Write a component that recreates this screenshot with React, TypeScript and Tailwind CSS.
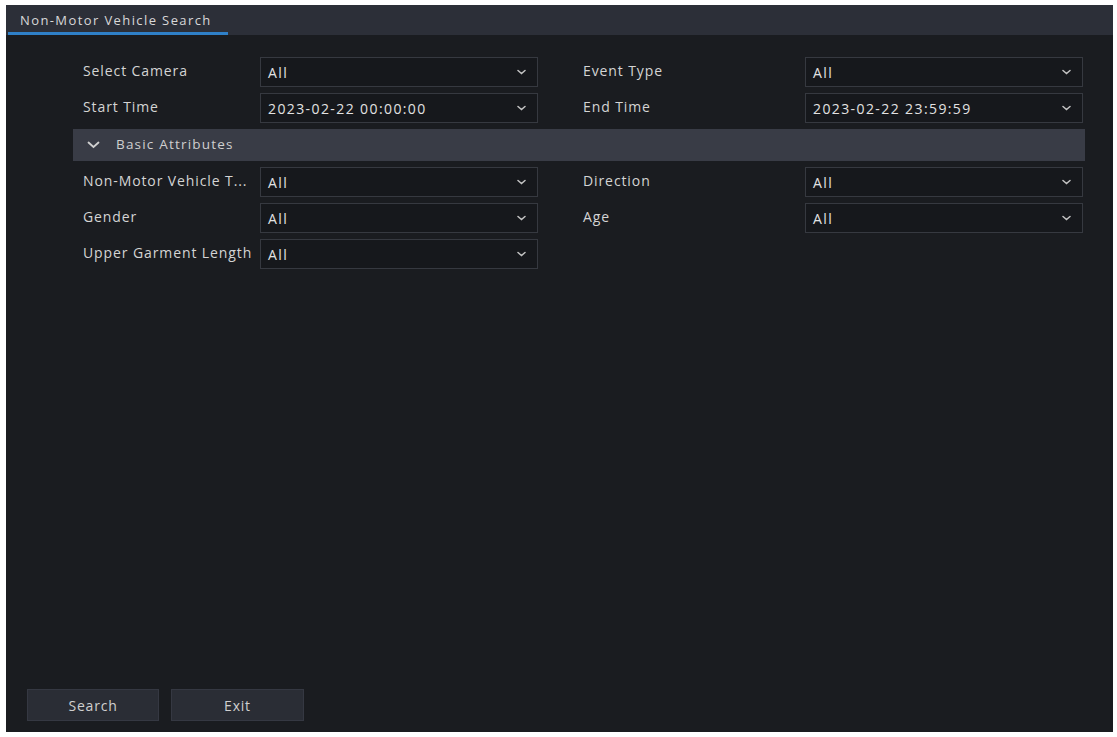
import React from 'react';

const font = { fontFamily: '"Open Sans", "Liberation Sans", sans-serif' };

function Chevron({ className = '', big = false }: { className?: string; big?: boolean }) {
  if (big) {
    return (
      <svg width="13" height="8" viewBox="0 0 13 8" className={className}>
        <path d="M1.5 1.5l5 4.5 5-4.5" fill="none" stroke="currentColor" strokeWidth="1.8" strokeLinecap="round" />
      </svg>
    );
  }
  return (
    <svg width="9" height="6" viewBox="0 0 9 6" className={className}>
      <path d="M1 1.5l3.5 3L8 1.5" fill="none" stroke="currentColor" strokeWidth="1.5" strokeLinecap="round" />
    </svg>
  );
}

function Select({ value }: { value: string }) {
  return (
    <div className="flex h-[30px] w-[278px] items-center justify-between border border-[#363940] bg-[#16181c] pl-[7px] pr-[11px]">
      <span className="text-[14px] tracking-[1.4px] text-[#e2e2e2]">{value}</span>
      <Chevron className="text-[#c4c4c4]" />
    </div>
  );
}

function Field({ label, value, right = false }: { label: string; value: string; right?: boolean }) {
  return (
    <div className="flex items-center">
      <div className={`${right ? 'w-[222px]' : 'w-[177px]'} -mt-[3px] whitespace-nowrap text-[14px] tracking-[0.9px] text-[#d4d4d4]`}>{label}</div>
      <Select value={value} />
    </div>
  );
}

export default function App() {
  return (
    <div className="h-[737px] w-[1117px] bg-white pl-[6px] pr-[4px] pt-[5px]" style={font}>
      <div className="flex h-[727px] flex-col bg-[#1a1c20]">
        <div className="flex h-[30px] items-end bg-[#2c2f38]">
          <div className="ml-[2px] w-[220px] border-b-[3px] border-[#2f80c8] pb-[2px] pl-[12px] text-[13px] tracking-[1.4px] text-[#d8d8d8]">
            Non-Motor Vehicle Search
          </div>
        </div>

        <div className="flex flex-1 flex-col pt-[22px]">
          <div className="flex flex-col gap-[6px] pl-[77px]">
            <div className="flex gap-[45px]">
              <Field label="Select Camera" value="All" />
              <Field label="Event Type" value="All" right />
            </div>
            <div className="flex gap-[45px]">
              <Field label="Start Time" value="2023-02-22 00:00:00" />
              <Field label="End Time" value="2023-02-22 23:59:59" right />
            </div>
          </div>

          <div className="ml-[67px] mt-[6px] flex h-[32px] w-[1012px] items-center bg-[#393c46] pl-[14px]">
            <Chevron big className="text-[#d0d0d0]" />
            <span className="ml-[16px] -mt-[2px] text-[13.5px] tracking-[1.2px] text-[#cfcfcf]">Basic Attributes</span>
          </div>

          <div className="mt-[6px] flex flex-col gap-[6px] pl-[77px]">
            <div className="flex gap-[45px]">
              <Field label="Non-Motor Vehicle T..." value="All" />
              <Field label="Direction" value="All" right />
            </div>
            <div className="flex gap-[45px]">
              <Field label="Gender" value="All" />
              <Field label="Age" value="All" right />
            </div>
            <div className="flex gap-[45px]">
              <Field label="Upper Garment Length" value="All" />
            </div>
          </div>

          <div className="mt-auto flex gap-[12px] pb-[11px] pl-[21px]">
            <button className="h-[32px] w-[132px] border border-[#353842] bg-[#2a2d35] text-[14px] tracking-[0.8px] text-[#d0d0d0]">Search</button>
            <button className="h-[32px] w-[133px] border border-[#353842] bg-[#2a2d35] text-[14px] tracking-[0.8px] text-[#d0d0d0]">Exit</button>
          </div>
        </div>
      </div>
    </div>
  );
}
